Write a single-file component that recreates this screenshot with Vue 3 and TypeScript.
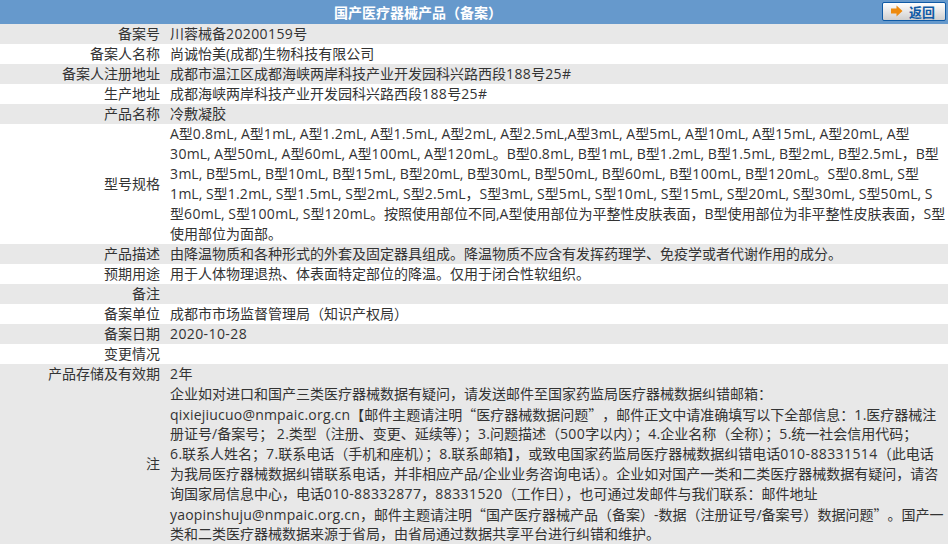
<script setup lang="ts">
interface Row { label: string; lines: string[]; shaded: boolean }
interface Part { text: string; kind: string }

const rows: Row[] = [
  { label: '备案号', shaded: true, lines: ['川蓉械备20200159号'] },
  { label: '备案人名称', shaded: false, lines: ['尚诚怡美(成都)生物科技有限公司'] },
  { label: '备案人注册地址', shaded: true, lines: ['成都市温江区成都海峡两岸科技产业开发园科兴路西段188号25#'] },
  { label: '生产地址', shaded: false, lines: ['成都海峡两岸科技产业开发园科兴路西段188号25#'] },
  { label: '产品名称', shaded: true, lines: ['冷敷凝胶'] },
  {
    label: '型号规格',
    shaded: false,
    lines: [
      'A型0.8mL, A型1mL, A型1.2mL, A型1.5mL, A型2mL, A型2.5mL,A型3mL, A型5mL, A型10mL, A型15mL, A型20mL, A型',
      '30mL, A型50mL, A型60mL, A型100mL, A型120mL。B型0.8mL, B型1mL, B型1.2mL, B型1.5mL, B型2mL, B型2.5mL，B型',
      '3mL, B型5mL, B型10mL, B型15mL, B型20mL, B型30mL, B型50mL, B型60mL, B型100mL, B型120mL。S型0.8mL, S型',
      '1mL, S型1.2mL, S型1.5mL, S型2mL, S型2.5mL，S型3mL, S型5mL, S型10mL, S型15mL, S型20mL, S型30mL, S型50mL, S',
      '型60mL, S型100mL, S型120mL。按照使用部位不同,A型使用部位为平整性皮肤表面，B型使用部位为非平整性皮肤表面，S型',
      '使用部位为面部。',
    ],
  },
  { label: '产品描述', shaded: true, lines: ['由降温物质和各种形式的外套及固定器具组成。降温物质不应含有发挥药理学、免疫学或者代谢作用的成分。'] },
  { label: '预期用途', shaded: false, lines: ['用于人体物理退热、体表面特定部位的降温。仅用于闭合性软组织。'] },
  { label: '备注', shaded: true, lines: [''] },
  { label: '备案单位', shaded: false, lines: ['成都市市场监督管理局（知识产权局）'] },
  { label: '备案日期', shaded: true, lines: ['2020-10-28'] },
  { label: '变更情况', shaded: false, lines: [''] },
  { label: '产品存储及有效期', shaded: true, lines: ['2年'] },
  {
    label: '注',
    shaded: true,
    lines: [
      '企业如对进口和国产三类医疗器械数据有疑问，请发送邮件至国家药监局医疗器械数据纠错邮箱：',
      'qixiejiucuo@nmpaic.org.cn【邮件主题请注明“医疗器械数据问题”，邮件正文中请准确填写以下全部信息：1.医疗器械注',
      '册证号/备案号； 2.类型（注册、变更、延续等）；3.问题描述（500字以内）；4.企业名称（全称）；5.统一社会信用代码；',
      '6.联系人姓名；7.联系电话（手机和座机）；8.联系邮箱】，或致电国家药监局医疗器械数据纠错电话010-88331514（此电话',
      '为我局医疗器械数据纠错联系电话，并非相应产品/企业业务咨询电话）。企业如对国产一类和二类医疗器械数据有疑问，请咨',
      '询国家局信息中心，电话010-88332877，88331520（工作日），也可通过发邮件与我们联系：邮件地址',
      'yaopinshuju@nmpaic.org.cn，邮件主题请注明“国产医疗器械产品（备案）-数据（注册证号/备案号）数据问题”。国产一',
      '类和二类医疗器械数据来源于省局，由省局通过数据共享平台进行纠错和维护。',
    ],
  },
]

// Split a line so digits, e-mail addresses and curly quotes can be tuned apart.
function parts(line: string): Part[] {
  return line
    .split(/(“|”|\d[\d-]*|[a-z@.]{10,})/)
    .filter(Boolean)
    .map((text) => {
      if (text === '“') return { text, kind: 'q-open' }
      if (text === '”') return { text, kind: 'q-close' }
      if (/^\d/.test(text)) return { text, kind: 'num' }
      if (/^[a-z@.]{10,}$/.test(text)) return { text, kind: 'mail' }
      return { text, kind: '' }
    })
}
</script>

<template>
  <div class="page">
    <header class="head">
      <h1 class="title">国产医疗器械产品（备案）</h1>
      <button class="back" type="button">
        <svg class="arrow" width="12" height="12" viewBox="0 0 12 12" aria-hidden="true">
          <path d="M0 3.5H5.5V0.5L11.5 6L5.5 11.5V8.5H0Z" fill="#ee8a0c" />
        </svg>
        <span>返回</span>
      </button>
    </header>
    <div v-for="row in rows" :key="row.label" class="row" :class="{ shaded: row.shaded }">
      <div class="label">{{ row.label }}</div>
      <div class="value">
        <div v-for="(line, i) in row.lines" :key="i" class="line">
          <span v-for="(p, j) in parts(line)" :key="j" :class="p.kind">{{ p.text }}</span>
        </div>
      </div>
    </div>
  </div>
</template>

<style scoped>
.page {
  width: 948px;
  font-family: "Open Sans", "Noto Sans CJK SC", sans-serif;
  font-size: 14px;
  line-height: 20px;
  color: #333;
}
.num {
  letter-spacing: 0.4px;
}
.mail {
  letter-spacing: 0.2px;
}
.q-open,
.q-close {
  display: inline-block;
  width: 14px;
  font-family: "Noto Sans CJK SC", sans-serif;
}
.q-open {
  text-align: right;
}
.q-close {
  text-align: left;
}
.head {
  height: 24px;
  background: #6699cc;
  display: flex;
  align-items: center;
  justify-content: space-between;
  padding: 0 2px 0 334px;
  box-sizing: border-box;
}
.title {
  margin: 0;
  font-size: 14px;
  font-weight: bold;
  color: #fff;
  font-family: "Noto Sans CJK SC", sans-serif;
}
.back {
  width: 64px;
  height: 19px;
  margin-top: -2px;
  padding: 0 0 0 8px;
  display: flex;
  align-items: center;
  gap: 6px;
  border: 1px solid #0f5aa5;
  border-radius: 2px;
  background: linear-gradient(#ffffff, #cfcfcf);
  color: #0f5aa5;
  font-family: "Noto Sans CJK SC", sans-serif;
  font-size: 13px;
  font-weight: bold;
}
.arrow {
  flex: none;
}
.row {
  display: flex;
  align-items: center;
  min-height: 20px;
}
.shaded {
  background: #e8e8e8;
}
.label {
  width: 160px;
  flex: none;
  text-align: right;
}
.value {
  flex: 1;
  padding-left: 10px;
}
.line {
  height: 20px;
  white-space: nowrap;
}
</style>
